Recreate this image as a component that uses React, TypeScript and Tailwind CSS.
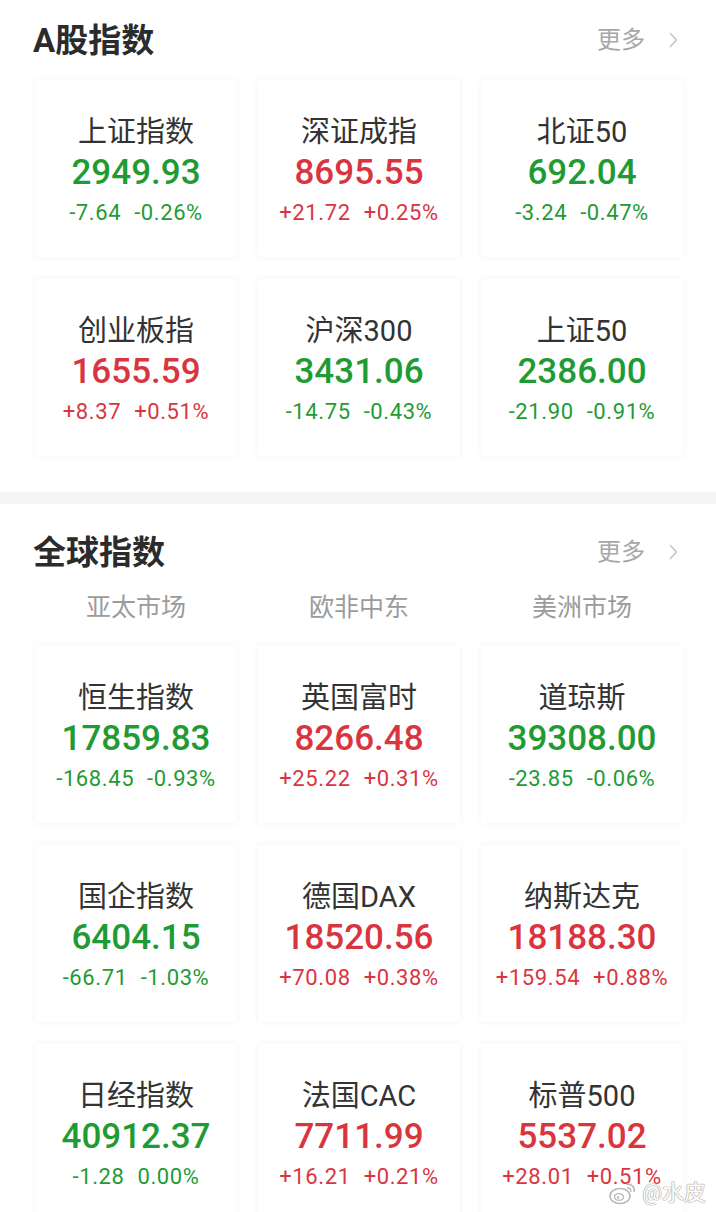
import React from "react";

type Quote = {
  name: string;
  value: string;
  change: string;
  pct: string;
  up: boolean;
};

const aShares: Quote[] = [
  { name: "上证指数", value: "2949.93", change: "-7.64", pct: "-0.26%", up: false },
  { name: "深证成指", value: "8695.55", change: "+21.72", pct: "+0.25%", up: true },
  { name: "北证50", value: "692.04", change: "-3.24", pct: "-0.47%", up: false },
  { name: "创业板指", value: "1655.59", change: "+8.37", pct: "+0.51%", up: true },
  { name: "沪深300", value: "3431.06", change: "-14.75", pct: "-0.43%", up: false },
  { name: "上证50", value: "2386.00", change: "-21.90", pct: "-0.91%", up: false },
];

const globalIdx: Quote[] = [
  { name: "恒生指数", value: "17859.83", change: "-168.45", pct: "-0.93%", up: false },
  { name: "英国富时", value: "8266.48", change: "+25.22", pct: "+0.31%", up: true },
  { name: "道琼斯", value: "39308.00", change: "-23.85", pct: "-0.06%", up: false },
  { name: "国企指数", value: "6404.15", change: "-66.71", pct: "-1.03%", up: false },
  { name: "德国DAX", value: "18520.56", change: "+70.08", pct: "+0.38%", up: true },
  { name: "纳斯达克", value: "18188.30", change: "+159.54", pct: "+0.88%", up: true },
  { name: "日经指数", value: "40912.37", change: "-1.28", pct: "0.00%", up: false },
  { name: "法国CAC", value: "7711.99", change: "+16.21", pct: "+0.21%", up: true },
  { name: "标普500", value: "5537.02", change: "+28.01", pct: "+0.51%", up: true },
];

function SectionHeader({ title }: { title: string }) {
  return (
    <div className="flex h-[80px] items-center justify-between pl-[33px] pr-[38px]">
      <h2 className="text-[33px] font-bold leading-none text-[#2b2b2b]">{title}</h2>
      <div className="flex items-center gap-[24px] text-[#a8a8a8]">
        <span className="text-[24px] leading-none">更多</span>
        <svg width="9" height="16" viewBox="0 0 9 16" fill="none">
          <path d="M1.5 1.5 L7.5 8 L1.5 14.5" stroke="#c4c4c4" strokeWidth="1.6" strokeLinecap="round" strokeLinejoin="round" />
        </svg>
      </div>
    </div>
  );
}

function Card({ q }: { q: Quote }) {
  const color = q.up ? "text-[#d9353f]" : "text-[#1f9b36]";
  return (
    <div className="flex h-[177px] flex-col items-center bg-white pt-[35px] shadow-[0_0_7px_rgba(0,0,0,0.05)]">
      <div className="text-[29px] leading-[34px] text-[#333333]">{q.name}</div>
      <div className={`mt-[2px] text-[35px] font-medium leading-[44px] ${color}`}>{q.value}</div>
      <div className={`mt-[3px] flex gap-[13px] text-[22px] leading-[30px] tracking-[0.6px] ${color}`}>
        <span>{q.change}</span>
        <span>{q.pct}</span>
      </div>
    </div>
  );
}

function Grid({ items }: { items: Quote[] }) {
  return (
    <div className="grid grid-cols-3 gap-x-[21px] gap-y-[22px] pl-[35px] pr-[33px]">
      {items.map((q) => (
        <Card key={q.name} q={q} />
      ))}
    </div>
  );
}

export default function App() {
  return (
    <div
      className="relative h-[1212px] w-[716px] overflow-hidden bg-white"
      style={{ fontFamily: 'Roboto, "Noto Sans CJK SC", sans-serif' }}
    >
      <SectionHeader title="A股指数" />
      <Grid items={aShares} />
      <div className="mt-[36px] h-[12px] bg-[#f5f5f5]" />

      <div className="pt-[8px]">
        <SectionHeader title="全球指数" />
      </div>
      <div className="grid grid-cols-3 gap-x-[21px] pl-[35px] pr-[33px] pb-[22px] text-[25px] leading-[32px] text-[#9b9b9b]">
        <div className="text-center">亚太市场</div>
        <div className="text-center">欧非中东</div>
        <div className="text-center">美洲市场</div>
      </div>
      <Grid items={globalIdx} />

      <div className="absolute bottom-[6px] right-[10px] flex items-center gap-[4px]">
        <svg width="30" height="26" viewBox="0 0 30 26" fill="none">
          <ellipse cx="12" cy="16" rx="10" ry="7.5" stroke="#b8b8b8" strokeWidth="1.6" fill="rgba(255,255,255,0.7)" />
          <ellipse cx="11" cy="17" rx="4.5" ry="3.4" stroke="#b8b8b8" strokeWidth="1.4" />
          <circle cx="10" cy="17.5" r="1.2" fill="#b8b8b8" />
          <path d="M19 4.5 C23.5 3.8 27 7 26.2 11.5" stroke="#b8b8b8" strokeWidth="1.6" strokeLinecap="round" />
          <path d="M19.5 8 C21.8 7.7 23.2 9.2 22.8 11.3" stroke="#b8b8b8" strokeWidth="1.4" strokeLinecap="round" />
        </svg>
        <span
          className="text-[22px] leading-none text-white"
          style={{ textShadow: "0 0 1px #9a9a9a, 0 0 1px #9a9a9a, 0 0 1px #9a9a9a" }}
        >
          @水皮
        </span>
      </div>
    </div>
  );
}
